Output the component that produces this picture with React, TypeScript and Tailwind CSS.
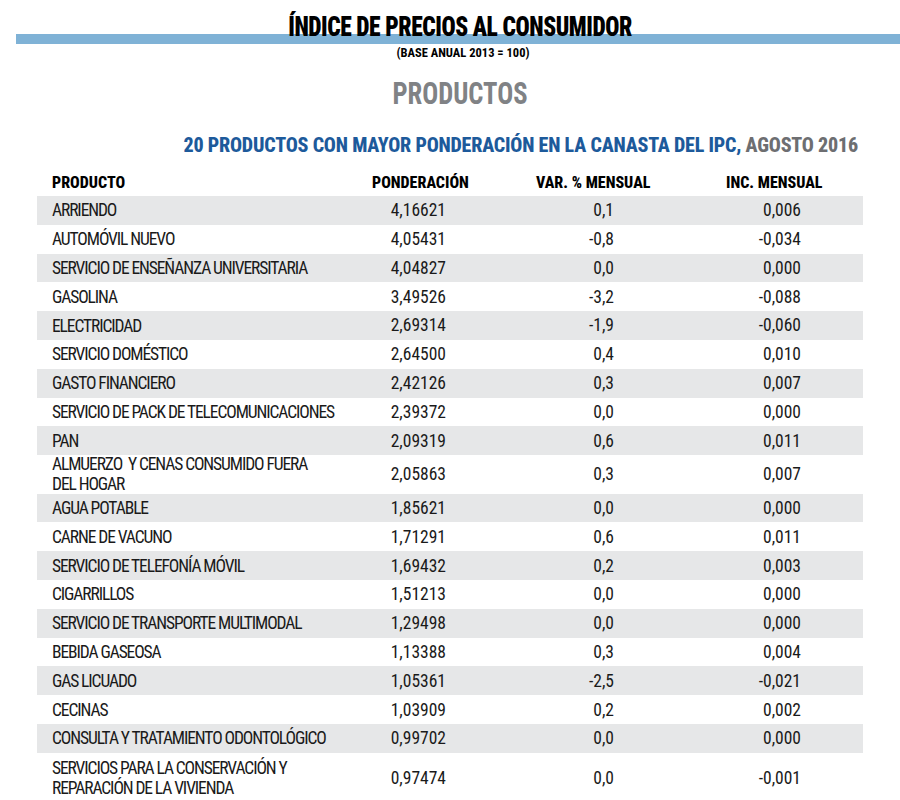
type Row = {
  name: string[];
  pond: string;
  varm: string;
  inc: string;
};

const rows: Row[] = [
  { name: ['ARRIENDO'], pond: '4,16621', varm: '0,1', inc: '0,006' },
  { name: ['AUTOMÓVIL NUEVO'], pond: '4,05431', varm: '-0,8', inc: '-0,034' },
  { name: ['SERVICIO DE ENSEÑANZA UNIVERSITARIA'], pond: '4,04827', varm: '0,0', inc: '0,000' },
  { name: ['GASOLINA'], pond: '3,49526', varm: '-3,2', inc: '-0,088' },
  { name: ['ELECTRICIDAD'], pond: '2,69314', varm: '-1,9', inc: '-0,060' },
  { name: ['SERVICIO DOMÉSTICO'], pond: '2,64500', varm: '0,4', inc: '0,010' },
  { name: ['GASTO FINANCIERO'], pond: '2,42126', varm: '0,3', inc: '0,007' },
  { name: ['SERVICIO DE PACK DE TELECOMUNICACIONES'], pond: '2,39372', varm: '0,0', inc: '0,000' },
  { name: ['PAN'], pond: '2,09319', varm: '0,6', inc: '0,011' },
  { name: ['ALMUERZO  Y CENAS CONSUMIDO FUERA', 'DEL HOGAR'], pond: '2,05863', varm: '0,3', inc: '0,007' },
  { name: ['AGUA POTABLE'], pond: '1,85621', varm: '0,0', inc: '0,000' },
  { name: ['CARNE DE VACUNO'], pond: '1,71291', varm: '0,6', inc: '0,011' },
  { name: ['SERVICIO DE TELEFONÍA MÓVIL'], pond: '1,69432', varm: '0,2', inc: '0,003' },
  { name: ['CIGARRILLOS'], pond: '1,51213', varm: '0,0', inc: '0,000' },
  { name: ['SERVICIO DE TRANSPORTE MULTIMODAL'], pond: '1,29498', varm: '0,0', inc: '0,000' },
  { name: ['BEBIDA GASEOSA'], pond: '1,13388', varm: '0,3', inc: '0,004' },
  { name: ['GAS LICUADO'], pond: '1,05361', varm: '-2,5', inc: '-0,021' },
  { name: ['CECINAS'], pond: '1,03909', varm: '0,2', inc: '0,002' },
  { name: ['CONSULTA Y TRATAMIENTO ODONTOLÓGICO'], pond: '0,99702', varm: '0,0', inc: '0,000' },
  { name: ['SERVICIOS PARA LA CONSERVACIÓN Y', 'REPARACIÓN DE LA VIVIENDA'], pond: '0,97474', varm: '0,0', inc: '-0,001' },
];

const IpcTable = () => {
  return (
    <div className="w-[900px] h-[800px] overflow-hidden bg-white font-['Roboto_Condensed','Liberation_Sans_Narrow',sans-serif] text-[#1a1a1a]">
      {/* cabecera */}
      <div className="pt-[10px]">
        <h1 className="relative z-10 pl-[24px] scale-x-[0.84] text-center text-[28px] leading-[34px] font-black text-black tracking-[-0.5px]">
          ÍNDICE DE PRECIOS AL CONSUMIDOR
        </h1>
        <div className="ml-[16px] -mt-[10px] h-[10px] bg-[#7fb2d6]" />
        <p className="mt-[2px] pl-[26px] text-center text-[12.5px] leading-[14px] font-bold text-black">(BASE ANUAL 2013 = 100)</p>
        <h2 className="mt-[15px] pl-[24px] scale-x-[0.83] text-center text-[32px] leading-[36px] font-bold text-[#808285]">PRODUCTOS</h2>
        <h3 className="mt-[22px] pr-[42px] text-right text-[20px] leading-[24px] font-extrabold tracking-[-0.2px] text-[#1d5a9b]">
          20 PRODUCTOS CON MAYOR PONDERACIÓN EN LA CANASTA DEL IPC, <span className="text-[#6d6e71]">AGOSTO 2016</span>
        </h3>
      </div>

      {/* tabla */}
      <div className="mt-[13px] ml-[37px] w-[826px]">
        <div className="flex items-center h-[26px] pl-[15px] text-[16px] font-extrabold text-black">
          <span className="w-[320px]">PRODUCTO</span>
          <span className="w-[164px]">PONDERACIÓN</span>
          <span className="w-[190px]">VAR. % MENSUAL</span>
          <span>INC. MENSUAL</span>
        </div>
        {rows.map((r, i) => (
          <div
            key={r.name[0]}
            className={`flex items-center pl-[15px] text-[17.5px] ${i % 2 === 0 ? 'bg-[#e6e7e8]' : 'bg-white'} ${
              r.name.length > 1 ? (i === rows.length - 1 ? 'h-[50px]' : 'h-[38.5px]') : 'h-[28.8px]'
            }`}
          >
            <div className="w-[298px] leading-[20px] tracking-[-1.1px]">
              {r.name.map((l) => (
                <div key={l} className="whitespace-pre">{l}</div>
              ))}
            </div>
            <span className="w-[96px] text-right">{r.pond}</span>
            <span className="w-[168px] text-right">{r.varm}</span>
            <span className="w-[187px] text-right">{r.inc}</span>
          </div>
        ))}
      </div>
    </div>
  );
};

export default function App() {
  return <IpcTable />;
}
